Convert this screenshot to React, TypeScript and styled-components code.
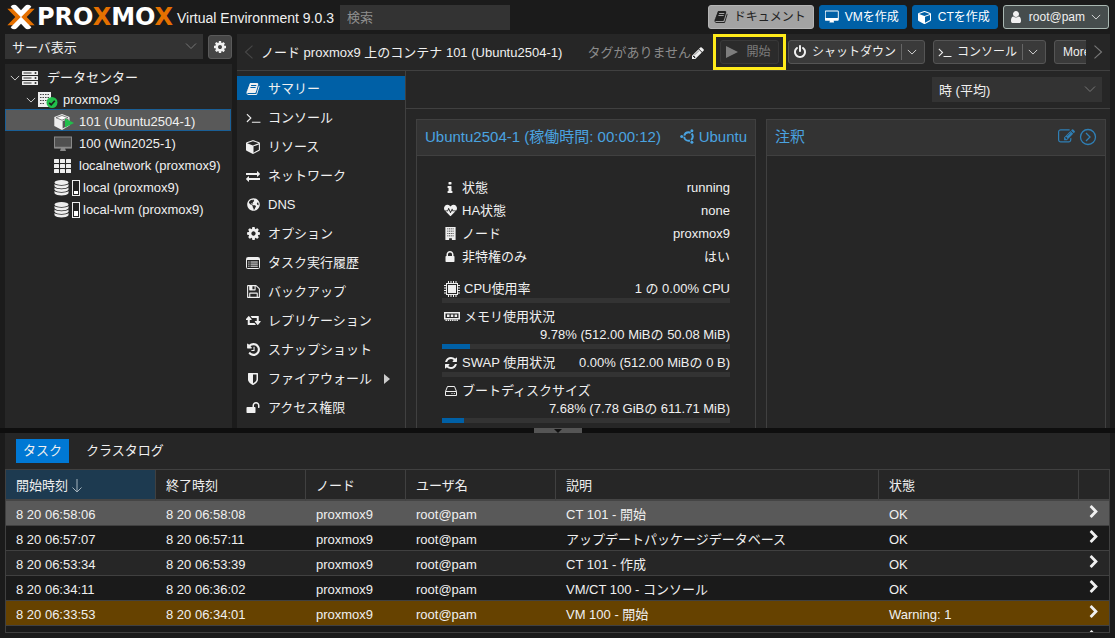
import React from "react";
import styled, { createGlobalStyle, css } from "styled-components";
import { FaHeartbeat, FaGlobeAmericas } from "react-icons/fa";

const GlobalStyle = createGlobalStyle`
  * { box-sizing: border-box; }
  body {
    margin: 0;
    background: #1b1b1b;
    color: #f0f0f0;
    font-family: "Liberation Sans", "Noto Sans CJK JP", sans-serif;
    font-size: 13px;
    line-height: 18px;
  }
  button, input, select {
    font-family: inherit;
    font-size: inherit;
    line-height: inherit;
    color: inherit;
  }
`;

/* ---------- icons ---------- */

const glyphs = {
  book: "M1703 478q40 57 18 129l-275 906q-19 64-76.5 107.5t-122.5 43.5h-923q-77 0-148.5-53.5t-99.5-131.5q-24-67-2-127 0-4 3-27t4-37q1-8-3-21.5t-3-19.5q2-11 8-21t16.5-23.5 16.5-23.5q23-38 45-91.5t30-91.5q3-10 .5-30t-.5-28q3-11 17-28t17-23q21-36 42-92t25-90q1-9-2.5-32t.5-28q4-13 22-30.5t22-22.5q19-26 42.5-84.5t27.5-96.5q1-8-3-25.5t-2-26.5q2-8 9-18t18-23 17-21q8-12 16.5-30.5t15-35 16-36 19.5-32 26.5-23.5 36-11.5 47.5 5.5l-1 3q38-9 51-9h761q74 0 114 56t18 130l-274 906q-36 119-71.5 153.5t-128.5 34.5h-869q-27 0-38 15-11 16-1 43 24 70 144 70h923q29 0 56-15.5t35-41.5l300-987q7-22 5-57 38 15 59 43zm-1064 2q-4 13 2 22.5t20 9.5h608q13 0 25.5-9.5t16.5-22.5l21-64q4-13-2-22.5t-20-9.5h-608q-13 0-25.5 9.5t-16.5 22.5zm-83 256q-4 13 2 22.5t20 9.5h608q13 0 25.5-9.5t16.5-22.5l21-64q4-13-2-22.5t-20-9.5h-608q-13 0-25.5 9.5t-16.5 22.5z",
  cube: "M896 1629l640-349v-636l-640 233v752zm-64-865l698-254-698-254-698 254zm832-252v768q0 35-18 65t-49 47l-704 384q-28 16-61 16t-61-16l-704-384q-31-17-49-47t-18-65v-768q0-40 23-73t61-47l704-256q22-8 44-8t44 8l704 256q38 14 61 47t23 73z",
  exchange: "M1792 1184v192q0 13-9.5 22.5t-22.5 9.5h-1376v192q0 13-9.5 22.5t-22.5 9.5q-12 0-24-10l-319-320q-9-9-9-22 0-14 9-23l320-320q9-9 23-9 13 0 22.5 9.5t9.5 22.5v192h1376q13 0 22.5 9.5t9.5 22.5zm0-544q0 14-9 23l-320 320q-9 9-23 9-13 0-22.5-9.5t-9.5-22.5v-192h-1376q-13 0-22.5-9.5t-9.5-22.5v-192q0-13 9.5-22.5t22.5-9.5h1376v-192q0-14 9-23t23-9q12 0 24 10l319 319q9 9 9 23z",
  cog: "M1152 896q0-106-75-181t-181-75-181 75-75 181 75 181 181 75 181-75 75-181zm512-109v222q0 12-8 23t-20 13l-185 28q-19 54-39 91 35 50 107 138 10 12 10 25t-9 23q-27 37-99 108t-94 71q-12 0-26-9l-138-108q-44 23-91 38-16 136-29 186-7 28-36 28h-222q-14 0-24.5-8.5t-11.5-21.5l-28-184q-49-16-90-37l-141 107q-10 9-25 9-14 0-25-11-126-114-165-168-7-10-7-23 0-12 8-23 15-21 51-66.5t54-70.5q-27-50-41-99l-183-27q-13-2-21-12.5t-8-23.5v-222q0-12 8-23t19-13l186-28q14-46 39-92-40-57-107-138-10-12-10-24 0-10 9-23 26-36 98.5-107.5t94.5-71.5q13 0 26 10l138 107q44-23 91-38 16-136 29-186 7-28 36-28h222q14 0 24.5 8.5t11.5 21.5l28 184q49 16 90 37l142-107q9-9 24-9 13 0 25 10 129 119 165 170 7 8 7 22 0 12-8 23-15 21-51 66.5t-54 70.5q26 50 41 98l183 28q13 2 21 12.5t8 23.5z",
  terminal: "M649 983l-466 466q-10 10-23 10t-23-10l-50-50q-10-10-10-23t10-23l393-393-393-393q-10-10-10-23t10-23l50-50q10-10 23-10t23 10l466 466q10 10 10 23t-10 23zm1079 457v64q0 14-9 23t-23 9h-960q-14 0-23-9t-9-23v-64q0-14 9-23t23-9h960q14 0 23 9t9 23z",
  desktop: "M1728 992v-832q0-13-9.500-22.500t-22.500-9.500h-1600q-13 0-22.500 9.500t-9.500 22.500v832q0 13 9.500 22.500t22.500 9.500h1600q13 0 22.500-9.500t9.500-22.500zm128-832v1088q0 66-47 113t-113 47h-544q0 37 16 77.500t32 71 16 43.500q0 26-19 45t-45 19h-512q-26 0-45-19t-19-45q0-14 16-44t32-70 16-78h-544q-66 0-113-47t-47-113v-1088q0-66 47-113t113-47h1600q66 0 113 47t47 113z",
  retweet: "M1216 1568q0 13-9.5 22.5t-22.5 9.5h-960q-8 0-13.500-2t-9-7-5.500-8-3-11.500-1-11.500v-600h-192q-26 0-45-19t-19-45q0-24 15-41l320-384q19-22 49-22t49 22l320 384q15 17 15 41 0 26-19 45t-45 19h-192v384h576q16 0 25 11l160 192q7 10 7 21zm640-416q0 24-15 41l-320 384q-20 23-49 23t-49-23l-320-384q-15-17-15-41 0-26 19-45t45-19h192v-384h-576q-16 0-25-12l-160-192q-7-9-7-20 0-13 9.500-22.500t22.500-9.500h960q8 0 13.500 2t9 7 5.500 8 3 11.500 1 11.500v600h192q26 0 45 19t19 45z",
  history: "M1664 896q0 156-61 298t-164 245-245 164-298 61q-172 0-327-72.5t-264-204.5q-7-10-6.5-22.5t8.5-20.5l137-138q10-9 25-9 16 2 23 12 73 95 179 147t225 52q104 0 198.5-40.5t163.5-109.5 109.5-163.5 40.5-198.5-40.5-198.5-109.5-163.5-163.5-109.5-198.5-40.5q-98 0-188 35.5t-160 101.5l137 138q31 30 14 69-17 40-59 40h-448q-26 0-45-19t-19-45v-448q0-42 40-59 39-17 69 14l130 129q107-101 244.5-156.5t284.5-55.5q156 0 298 61t245 164 164 245 61 298zm-640-288v448q0 14-9 23t-23 9h-320q-14 0-23-9t-9-23v-64q0-14 9-23t23-9h224v-352q0-14 9-23t23-9h64q14 0 23 9t9 23z",
  shield: "M1344 960v-640h-448v1137q119-63 213-137 235-184 235-360zm192-768v768q0 86-33.5 170.5t-83 150-118 127.5-126.5 103-121 77.5-89.5 49.5-42.5 20q-12 6-26 6t-26-6q-16-7-42.5-20t-89.5-49.5-121-77.5-126.5-103-118-127.5-83-150-33.5-170.5v-768q0-26 19-45t45-19h1152q26 0 45 19t19 45z",
  unlock: "M1728 576v256q0 26-19 45t-45 19h-64q-26 0-45-19t-19-45v-256q0-106-75-181t-181-75-181 75-75 181v192h96q40 0 68 28t28 68v576q0 40-28 68t-68 28h-960q-40 0-68-28t-28-68v-576q0-40 28-68t68-28h672v-192q0-185 131.5-316.5t316.5-131.5 316.5 131.5 131.5 316.5z",
  lock: "M640 768h512v-192q0-106-75-181t-181-75-181 75-75 181v192zm832 96v576q0 40-28 68t-68 28h-960q-40 0-68-28t-28-68v-576q0-40 28-68t68-28h32v-192q0-184 132-316t316-132 316 132 132 316v192h32q40 0 68 28t28 68z",
  save: "M512 1536h768v-384h-768v384zm896 0h128v-896q0-14-10-38.5t-20-34.5l-281-281q-10-10-34-20t-39-10v416q0 40-28 68t-68 28h-576q-40 0-68-28t-28-68v-416h-128v1280h128v-416q0-40 28-68t68-28h832q40 0 68 28t28 68v416zm-384-928v-320q0-13-9.5-22.5t-22.5-9.5h-192q-13 0-22.5 9.5t-9.5 22.5v320q0 13 9.5 22.5t22.5 9.5h192q13 0 22.5-9.5t9.5-22.5zm640 32v928q0 40-28 68t-68 28h-1344q-40 0-68-28t-28-68v-1344q0-40 28-68t68-28h928q40 0 88 20t76 48l280 280q28 28 48 76t20 88z",
  refresh: "M1639 1056q0 5-1 7-64 268-268 434.5t-478 166.5q-146 0-282.5-55t-243.5-157l-129 129q-19 19-45 19t-45-19-19-45v-448q0-26 19-45t45-19h448q26 0 45 19t19 45-19 45l-137 137q71 66 161 102t187 36q134 0 250-65t186-179q11-17 53-117 8-23 30-23h192q13 0 22.5 9.5t9.5 22.5zm25-800v448q0 26-19 45t-45 19h-448q-26 0-45-19t-19-45 19-45l138-138q-148-137-349-137-134 0-250 65t-186 179q-11 17-53 117-8 23-30 23h-199q-13 0-22.5-9.5t-9.5-22.5v-7q65-268 270-434.5t480-166.5q146 0 284 55.5t245 156.5l130-129q19-19 45-19t45 19 19 45z",
  power: "M1664 896q0 156-61 298t-164 245-245 164-298 61-298-61-245-164-164-245-61-298q0-182 80.5-343t226.5-270q43-32 95.5-25t83.5 50q32 42 24.5 94.5t-49.5 84.5q-98 74-151.5 181t-53.5 228q0 104 40.5 198.5t109.5 163.5 163.5 109.5 198.5 40.5 198.5-40.5 163.5-109.5 109.5-163.5 40.5-198.5q0-121-53.5-228t-151.5-181q-42-32-49.5-84.5t24.5-94.5q31-43 84-50t95 25q146 109 226.5 270t80.5 343zm-640-768v640q0 52-38 90t-90 38-90-38-38-90v-640q0-52 38-90t90-38 90 38 38 90z",
  user: "M1536 1399q0 109-62.5 187t-150.5 78h-854q-88 0-150.5-78t-62.5-187q0-85 8.5-160.5t31.5-152 58.5-131 94-89 134.5-34.5q131 128 313 128t313-128q76 0 134.5 34.5t94 89 58.5 131 31.5 152 8.5 160.5zm-256-887q0 159-112.5 271.5t-271.5 112.5-271.5-112.5-112.5-271.5 112.5-271.5 271.5-112.5 271.5 112.5 112.5 271.5z",
  pencil: "M491 1536l91-91-235-235-91 91v107h128v128h107zm523-928q0-22-22-22-10 0-17 7l-542 542q-7 7-7 17 0 22 22 22 10 0 17-7l542-542q7-7 7-17zm-54-192l416 416-832 832h-416v-416zm683 96q0 53-37 90l-166 166-416-416 166-165q36-38 90-38 53 0 91 38l235 234q37 39 37 91z",
  info: "M1216 1344v128q0 26-19 45t-45 19h-512q-26 0-45-19t-19-45v-128q0-26 19-45t45-19h64v-384h-64q-26 0-45-19t-19-45v-128q0-26 19-45t45-19h384q26 0 45 19t19 45v576h64q26 0 45 19t19 45zm-128-1152v192q0 26-19 45t-45 19h-256q-26 0-45-19t-19-45v-192q0-26 19-45t45-19h256q26 0 45 19t19 45z",
  chevron: "M1363 877l-742 742q-19 19-45 19t-45-19l-166-166q-19-19-19-45t19-45l531-531-531-531q-19-19-19-45t19-45l166-166q19-19 45-19t45 19l742 742q19 19 19 45t-19 45z",
  edit: "M888 1184l116-116-152-152-116 116v56h96v96h56zm440-720q-16-16-33 1l-350 350q-17 17-1 33t33-1l350-350q17-17 1-33zm80 594v190q0 119-84.5 203.5t-203.5 84.5h-832q-119 0-203.5-84.5t-84.5-203.5v-832q0-119 84.5-203.5t203.5-84.5h832q63 0 117 25 15 7 18 23 3 17-9 29l-49 49q-14 14-32 8-23-6-45-6h-832q-66 0-113 47t-47 113v832q0 66 47 113t113 47h832q66 0 113-47t47-113v-126q0-13 9-22l64-64q15-15 35-7t20 29zm-96-738l288 288-672 672h-288v-288zm444 132l-92 92-288-288 92-92q28-28 68-28t68 28l152 152q28 28 28 68t-28 68z",
};

type GlyphName = keyof typeof glyphs;

const viewBoxes: Partial<Record<GlyphName, string>> = {
  desktop: "-32 0 1920 1792",
  retweet: "-32 128 1920 1792",
};

const Svg = styled.svg`
  display: block;
  flex: none;
`;

function Icon({ name, size = 14 }: { name: GlyphName; size?: number }) {
  return (
    <Svg width={size} height={size} viewBox={viewBoxes[name] ?? "0 0 1792 1792"} fill="currentColor" aria-hidden="true">
      <path d={glyphs[name]} />
    </Svg>
  );
}

function Chevron({ dir = "down", size = 12 }: { dir?: "down" | "left" | "right"; size?: number }) {
  const d = { down: "M1 3.500 L6 8.500 L11 3.500", left: "M9 0.500 L3 6 L9 11.500", right: "M3 0.500 L9 6 L3 11.500" }[dir];
  return (
    <Svg width={size} height={size} viewBox="0 0 12 12" fill="none" stroke="currentColor" strokeWidth="1" aria-hidden="true">
      <path d={d} />
    </Svg>
  );
}

const ServerIcon = () => (
  <Svg width="16" height="14" viewBox="0 0 16 14" aria-hidden="true">
    {[0, 5, 10].map((y) => (
      <g key={y}>
        <rect x="0" y={y} width="16" height="4" rx="0.500" fill="#eee" />
        <rect x="1.500" y={y + 1.500} width="8" height="1" fill="#333" />
        <rect x="12.500" y={y + 1} width="2" height="2" rx="1" fill="#333" />
      </g>
    ))}
  </Svg>
);

const Building = ({ size = 14 }: { size?: number }) => (
  <Svg width={size} height={size} viewBox="0 0 14 14" aria-hidden="true">
    <path d="M1.500 0h11v14h-4v-2h-3v2h-4z" fill="#eee" />
    <path d="M3.500 2h7M3.500 4.500h7M3.500 7h7M3.500 9.500h7" stroke="#444" strokeWidth="1" strokeDasharray="1.200 0.700" />
  </Svg>
);

const NodeIcon = () => (
  <Svg width="20" height="18" viewBox="0 0 20 18" aria-hidden="true">
    <path d="M0 1h13v15H0z" fill="#eee" />
    <path d="M2 3.500h9M2 6.500h9M2 9.500h9M2 12.500h5" stroke="#444" strokeWidth="1.200" strokeDasharray="1.500 1" />
    <circle cx="14" cy="11.500" r="5.500" fill="#21bf4b" />
    <path d="M11.200 11.800l2 2 3.600-4" stroke="#1c1c1c" strokeWidth="1.700" fill="none" />
  </Svg>
);

const RunningCt = () => (
  <Svg width="20" height="16" viewBox="0 0 20 16" aria-hidden="true">
    <path d="M8 0l7.500 3v8.500L8 16 .3 12V3z" fill="#eee" />
    <path d="M2 3.700l6 2.500 6-2.500-6-2.200z" fill="#fff" stroke="#666" strokeWidth="0.800" />
    <path d="M8.600 7.200l5.800-2.400v6.400l-5.800 3.400z" fill="#595959" />
    <path d="M11 4.500l9 4.500-9 4.500z" fill="#21bf4b" />
  </Svg>
);

const StoppedVm = () => (
  <Svg width="18" height="16" viewBox="0 0 18 16" aria-hidden="true">
    <rect x="0.500" y="1" width="17" height="11" fill="#505050" stroke="#8a8a8a" />
    <path d="M7 12h4l1 3H6z" fill="#8a8a8a" />
    <path d="M1 11.500h16" stroke="#8a8a8a" strokeWidth="1.500" />
  </Svg>
);

const GridIcon = () => (
  <Svg width="17" height="14" viewBox="0 0 17 14" fill="#eee" aria-hidden="true">
    {[0, 5, 10].map((y) => [0, 6, 12].map((x) => <rect key={x + "-" + y} x={x} y={y} width="5" height="4" rx="0.500" />))}
  </Svg>
);

const StorageIcon = ({ level }: { level: number }) => (
  <Svg width="26" height="16" viewBox="0 0 26 16" aria-hidden="true">
    <ellipse cx="7.500" cy="2.500" rx="7" ry="2.500" fill="#eee" />
    {[4, 7.5, 11].map((y) => (
      <path key={y} d={`M.5 ${y}c2 2.200 12 2.200 14 0v2.200c-2 3-12 3-14 0z`} fill="#eee" />
    ))}
    <rect x="18.500" y="0.500" width="7" height="15" fill="#222" stroke="#eee" />
    <rect x="20" y={14 - level} width="4" height={level} fill="#fff" />
  </Svg>
);

const ListIcon = () => (
  <Svg width="14" height="12" viewBox="0 0 14 12" fill="none" stroke="#eee" aria-hidden="true">
    <rect x="0.500" y="0.500" width="13" height="11" rx="1" />
    <path d="M1 2h12" strokeWidth="2" />
    <path d="M2.200 5h1.300M4.500 5h7.300M2.200 7.100h1.300M4.500 7.100h7.300M2.200 9.200h1.300M4.500 9.200h7.300" />
  </Svg>
);

const CpuIcon = () => (
  <Svg width="16" height="16" viewBox="0 0 16 16" aria-hidden="true">
    <rect x="2.500" y="2.500" width="11" height="11" fill="none" stroke="#eee" />
    <rect x="4" y="4" width="8" height="8" fill="#eee" />
    <path d="M4.500 0v16M7 0v16M9.500 0v16M12 0v16" stroke="#eee" strokeDasharray="2.500 11 2.500" />
    <path d="M0 4.500h16M0 7h16M0 9.500h16M0 12h16" stroke="#eee" strokeDasharray="2.500 11 2.500" />
  </Svg>
);

const MemoryIcon = () => (
  <Svg width="16" height="10" viewBox="0 0 16 10" aria-hidden="true">
    <rect x="0.750" y="0.750" width="14.500" height="6" fill="none" stroke="#eee" strokeWidth="1.500" />
    <path d="M3 2.500h2.500v2.500H3zM6.800 2.500h2.500v2.500H6.800zM10.600 2.500h2.500v2.500h-2.500z" fill="#eee" />
    <path d="M1.500 8.300h13" stroke="#eee" strokeWidth="1.600" strokeDasharray="1.400 0.800" />
  </Svg>
);

const DiskIcon = () => (
  <Svg width="12" height="10" viewBox="0 0 12 10" fill="none" stroke="#eee" aria-hidden="true">
    <path d="M.5 5.500L2.500.5h7l2 5v4H.5zM.5 5.500h11" strokeLinejoin="round" />
    <path d="M6.500 7.500h1M8.800 7.500h1" />
  </Svg>
);

const UbuntuIcon = () => (
  <Svg width="15" height="15" viewBox="0 0 15 15" fill="none" stroke="currentColor" aria-hidden="true">
    <circle cx="8.500" cy="7.500" r="4.300" strokeWidth="2" strokeDasharray="7.900 1.106" strokeDashoffset="-5.050" />
    <g fill="currentColor" stroke="none">
      <circle cx="1.700" cy="7.500" r="1.500" />
      <circle cx="11.900" cy="1.700" r="1.500" />
      <circle cx="11.900" cy="13.300" r="1.500" />
    </g>
  </Svg>
);

const PlayIcon = ({ size = 12 }: { size?: number }) => (
  <Svg width={size} height={size} viewBox="0 0 12 12" fill="currentColor" aria-hidden="true">
    <path d="M0 0l12 6-12 6z" />
  </Svg>
);

const LogoMark = () => (
  <Svg width="28" height="26" viewBox="0 0 84 78" aria-hidden="true">
    <path d="M1 14h14q6 0 10 4l20 21-20 21q-4 4-10 4H1l24-25z" fill="#e57000" />
    <path d="M83 14H69q-6 0-10 4L39 39l20 21q4 4 10 4h14L59 39z" fill="#e57000" />
    <path d="M11 8q3-6 10-6 6 0 9 4l12 13L54 6q3-4 9-4 7 0 10 6L42 40z" fill="#fff" />
    <path d="M11 70q3 6 10 6 6 0 9-4l12-13 12 13q3 4 9 4 7 0 10-6L42 38z" fill="#fff" />
  </Svg>
);

/* ---------- frame ---------- */

const Shell = styled.div`
  height: 100vh;
  display: flex;
  flex-direction: column;
  overflow: hidden;
`;

const TopBar = styled.header`
  display: flex;
  align-items: center;
  height: 34px;
  flex: none;
  padding: 0 6px 0 7px;
`;

const Wordmark = styled.span`
  margin-left: 2px;
  width: 140px;
  font-family: "DejaVu Sans", sans-serif;
  font-weight: 700;
  font-size: 24px;
  line-height: 26px;
  color: #fff;
`;

const Orange = styled.span`
  color: #e57000;
`;

const Version = styled.span`
  padding-top: 2px;
  font-size: 14px;
  white-space: nowrap;
`;

const Search = styled.input`
  width: 170px;
  height: 25px;
  margin-left: 6px;
  padding: 0 7px;
  border: 0;
  background: #333;
  &::placeholder {
    color: #8f8f8f;
    opacity: 1;
  }
`;

const TopActions = styled.div`
  display: flex;
  gap: 5px;
  margin-left: auto;
`;

type Tone = "plain" | "primary" | "light" | "user";

const tones = {
  plain: css`
    background: #3a3a3a;
    border-color: #555;
  `,
  primary: css`
    background: #0060a6;
    border-color: #0060a6;
    color: #fff;
  `,
  light: css`
    background: #a3a3a3;
    border-color: #b5b5b5;
    color: #222;
  `,
  user: css`
    background: #464d4d;
    border-color: #a9b8b2;
  `,
};

const Button = styled.button<{ $tone?: Tone; $gap?: number }>`
  display: flex;
  align-items: center;
  flex: none;
  gap: ${(p) => p.$gap ?? 6}px;
  height: 24px;
  padding: 0 7px 0 5px;
  border: 1px solid;
  border-radius: 3px;
  font-size: 12px;
  white-space: nowrap;
  ${(p) => tones[p.$tone ?? "plain"]}
  &:disabled {
    color: #7d7d7d;
    background: #2b2b2b;
    border-color: #383838;
  }
`;

const StripButton = styled(Button)`
  gap: 5px;
  padding-left: 4px;
`;

const MoreButton = styled(Button)`
  padding: 0 8px;
`;

const SplitArrow = styled.span`
  display: flex;
  align-items: center;
  height: 16px;
  padding-left: 5px;
  border-left: 1px solid #666;
`;

const Workspace = styled.div`
  flex: 1;
  min-height: 0;
  display: flex;
  gap: 5px;
  padding: 0 5px;
`;

const Sidebar = styled.aside`
  width: 227px;
  flex: none;
  display: flex;
  flex-direction: column;
`;

const ViewBar = styled.div`
  display: flex;
  gap: 5px;
  align-items: center;
  height: 25px;
  margin-bottom: 5px;
`;

const SelectBox = styled.div<{ $width?: number }>`
  position: relative;
  flex: ${(p) => (p.$width ? "none" : "1")};
  ${(p) => p.$width && `width: ${p.$width}px;`}
  height: 25px;
  color: #f0f0f0;
  select {
    appearance: none;
    width: 100%;
    height: 25px;
    padding: 2px 26px 0 7px;
    border: 0;
    background: #333;
  }
  svg {
    position: absolute;
    right: 6px;
    top: 6px;
    color: #777;
    pointer-events: none;
  }
`;

const GearButton = styled.button`
  display: flex;
  align-items: center;
  justify-content: center;
  width: 24px;
  height: 24px;
  padding: 0;
  border: 1px solid #5a5a5a;
  border-radius: 3px;
  background: #464646;
`;

const Tree = styled.ul`
  flex: 1;
  min-height: 0;
  margin: 0;
  padding: 1px 0;
  list-style: none;
  background: #262626;
`;

const TreeRow = styled.li<{ $indent: number; $selected?: boolean }>`
  display: flex;
  align-items: center;
  height: 22px;
  margin-right: 1px;
  padding: 4px 0 0 ${(p) => p.$indent}px;
  border: 1px solid ${(p) => (p.$selected ? "#1a5f96" : "transparent")};
  background: ${(p) => (p.$selected ? "#595959" : "transparent")};
  white-space: nowrap;
`;

const TreeIcon = styled.span<{ $width: number }>`
  display: flex;
  width: ${(p) => p.$width}px;
  margin-bottom: 1px;
`;

const Panel = styled.main`
  flex: 1;
  min-width: 0;
  display: flex;
  flex-direction: column;
  background: #262626;
`;

const PanelHeader = styled.div`
  display: flex;
  flex: none;
  height: 37px;
  border-bottom: 1px solid #404040;
`;

const ScrollArrow = styled.span<{ $dim?: boolean }>`
  display: flex;
  align-items: center;
  justify-content: center;
  flex: none;
  width: 24px;
  color: ${(p) => (p.$dim ? "#474747" : "#777")};
`;

const HeaderStrip = styled.div`
  flex: 1;
  min-width: 0;
  display: flex;
  align-items: center;
  overflow: hidden;
  white-space: nowrap;
`;

const Title = styled.span`
  flex: 1 0 auto;
  padding-top: 2px;
`;

const Tags = styled.span`
  display: flex;
  align-items: center;
  margin-right: 8px;
  padding-top: 2px;
  color: #8a8a8a;
  svg {
    color: #f0f0f0;
  }
`;

const Highlight = styled.span`
  display: flex;
  align-items: center;
  justify-content: center;
  flex: none;
  width: 73px;
  height: 36px;
  margin-right: 2px;
  border: 3px solid #ffeb1a;
`;

const HeaderButtons = styled.div`
  display: flex;
  gap: 8px;
  width: 298px;
  overflow: hidden;
`;

const PanelBody = styled.div`
  flex: 1;
  min-height: 0;
  display: flex;
  overflow: hidden;
`;

const Menu = styled.nav`
  display: flex;
  flex-direction: column;
  gap: 5px;
  flex: none;
  width: 169px;
  padding-top: 5px;
  border-right: 1px solid #404040;
`;

const MenuItem = styled.a<{ $active?: boolean }>`
  display: flex;
  align-items: center;
  flex: none;
  height: 24px;
  padding: 2px 0 0 9px;
  color: #f0f0f0;
  text-decoration: none;
  background: ${(p) => (p.$active ? "#0060a6" : "transparent")};
`;

const MenuIcon = styled.span`
  display: flex;
  justify-content: center;
  width: 14px;
  margin: 0 8px 1px 0;
`;

const SubmenuArrow = styled.span`
  margin-left: 12px;
  color: #ccc;
`;

const Content = styled.section`
  flex: 1;
  min-width: 0;
  display: flex;
  flex-direction: column;
`;

const ContentBar = styled.div`
  display: flex;
  justify-content: flex-end;
  align-items: center;
  flex: none;
  height: 38px;
  padding-right: 8px;
  border-bottom: 1px solid #404040;
`;

const Cards = styled.div`
  flex: 1;
  display: grid;
  grid-template-columns: 1fr 1fr;
  gap: 10px;
  padding: 10px 4px 0 10px;
`;

const Card = styled.article`
  border: 1px solid #404040;
  border-bottom: 0;
`;

const CardHeader = styled.h2`
  display: flex;
  align-items: center;
  justify-content: space-between;
  height: 36px;
  margin: 0;
  padding: 0 8px 2px;
  border-bottom: 1px solid #404040;
  background: #333;
  color: #4aa3e0;
  font-size: 15px;
  font-weight: 400;
  line-height: 20px;
  white-space: nowrap;
`;

const HeaderTools = styled.span`
  display: flex;
  align-items: center;
  gap: 4px;
`;

const CardBody = styled.div`
  padding: 20px 25px 0;
`;

const Fact = styled.div`
  display: flex;
  align-items: center;
  height: 23px;
`;

const Usage = styled.div`
  display: flex;
  flex-wrap: wrap;
  align-items: center;
  padding-top: 4px;
`;

const FactIcon = styled.span`
  display: flex;
  justify-content: center;
  min-width: 14px;
  margin: 0 5px 0 1px;
`;

const UsageIcon = styled(FactIcon)`
  margin: 0 4px 0 2px;
`;

const Value = styled.span<{ $full?: boolean }>`
  margin-left: auto;
  ${(p) =>
    p.$full &&
    css`
      width: 100%;
      text-align: right;
    `}
`;

const Track = styled.div`
  width: 100%;
  height: 5px;
  margin-bottom: 1px;
  background: #333;
`;

const Fill = styled.div`
  height: 5px;
  background: #0060a6;
`;

const UsageGroup = styled.div`
  padding-top: 8px;
`;

const RoundButton = styled.button`
  display: flex;
  padding: 0;
  border: 0;
  background: none;
  color: #2f7fb5;
`;

const Splitter = styled.div`
  display: flex;
  justify-content: center;
  flex: none;
  height: 5px;
  background: #0e0e0e;
`;

const SplitGrip = styled.button`
  display: flex;
  justify-content: center;
  width: 48px;
  height: 5px;
  padding: 1px 0 0;
  border: 0;
  background: #555;
`;

/* ---------- task log ---------- */

const LogPanel = styled.section`
  display: flex;
  flex-direction: column;
  flex: none;
  height: 200px;
  margin: 0 5px 5px;
  background: #262626;
`;

const Tabs = styled.div`
  display: flex;
  align-items: center;
  gap: 10px;
  flex: none;
  height: 36px;
  padding: 0 11px;
`;

const Tab = styled.button<{ $active?: boolean }>`
  height: 24px;
  padding: 0 7px;
  border: 0;
  background: ${(p) => (p.$active ? "#0078d4" : "transparent")};
`;

const TableBox = styled.div`
  flex: 1;
  min-height: 0;
  overflow: hidden;
  border: 1px solid #404040;
`;

const Table = styled.table`
  width: 100%;
  table-layout: fixed;
  border-collapse: separate;
  border-spacing: 0;
`;

const Th = styled.th<{ $sorted?: boolean }>`
  height: 31px;
  padding: 2px 10px 0;
  border-right: 1px solid #404040;
  border-bottom: 2px solid #454545;
  background: ${(p) => (p.$sorted ? "#1d3a50" : "transparent")};
  font-weight: 400;
  text-align: left;
  &:last-child {
    border-right: 0;
  }
  span {
    display: flex;
    align-items: center;
    gap: 4px;
  }
`;

const Row = styled.tr<{ $bg: string }>`
  background: ${(p) => p.$bg};
  td {
    height: 25px;
    padding: 4px 10px 0;
    border-bottom: 1px solid #404040;
    white-space: nowrap;
  }
  td:last-child {
    padding: 0 8px 2px;
  }
`;

const menu: { label: string; icon: React.ReactNode; sub?: boolean }[] = [
  { label: "サマリー", icon: <Icon name="book" /> },
  { label: "コンソール", icon: <Icon name="terminal" size={15} /> },
  { label: "リソース", icon: <Icon name="cube" size={15} /> },
  { label: "ネットワーク", icon: <Icon name="exchange" /> },
  { label: "DNS", icon: <FaGlobeAmericas size={13} /> },
  { label: "オプション", icon: <Icon name="cog" size={15} /> },
  { label: "タスク実行履歴", icon: <ListIcon /> },
  { label: "バックアップ", icon: <Icon name="save" size={15} /> },
  { label: "レプリケーション", icon: <Icon name="retweet" size={15} /> },
  { label: "スナップショット", icon: <Icon name="history" size={15} /> },
  { label: "ファイアウォール", icon: <Icon name="shield" />, sub: true },
  { label: "アクセス権限", icon: <Icon name="unlock" /> },
];

const facts = [
  { label: "状態", value: "running", icon: <Icon name="info" /> },
  { label: "HA状態", value: "none", icon: <FaHeartbeat size={13} /> },
  { label: "ノード", value: "proxmox9", icon: <Building size={13} /> },
  { label: "非特権のみ", value: "はい", icon: <Icon name="lock" /> },
];

const usages = [
  { label: "CPU使用率", value: "1 の 0.00% CPU", used: 0, wrap: false, icon: <CpuIcon /> },
  { label: "メモリ使用状況", value: "9.78% (512.00 MiBの 50.08 MiB)", used: 9.78, wrap: true, icon: <MemoryIcon /> },
  { label: "SWAP 使用状況", value: "0.00% (512.00 MiBの 0 B)", used: 0, wrap: false, icon: <Icon name="refresh" /> },
  { label: "ブートディスクサイズ", value: "7.68% (7.78 GiBの 611.71 MiB)", used: 7.68, wrap: true, icon: <DiskIcon /> },
];

const tasks = [
  { start: "8 20 06:58:06", end: "8 20 06:58:08", text: "CT 101 - 開始", status: "OK", bg: "#595959" },
  { start: "8 20 06:57:07", end: "8 20 06:57:11", text: "アップデートパッケージデータベース", status: "OK", bg: "#1a1a1a" },
  { start: "8 20 06:53:34", end: "8 20 06:53:39", text: "CT 101 - 作成", status: "OK", bg: "#262626" },
  { start: "8 20 06:34:11", end: "8 20 06:36:02", text: "VM/CT 100 - コンソール", status: "OK", bg: "#1a1a1a" },
  { start: "8 20 06:33:53", end: "8 20 06:34:01", text: "VM 100 - 開始", status: "Warning: 1", bg: "#664200" },
];

const leaves = [
  { label: "101 (Ubuntu2504-1)", icon: <RunningCt />, width: 25, selected: true },
  { label: "100 (Win2025-1)", icon: <StoppedVm />, width: 25 },
  { label: "localnetwork (proxmox9)", icon: <GridIcon />, width: 25 },
  { label: "local (proxmox9)", icon: <StorageIcon level={3} />, width: 29 },
  { label: "local-lvm (proxmox9)", icon: <StorageIcon level={5} />, width: 29 },
];

export default function App() {
  return (
    <Shell>
      <GlobalStyle />
      <TopBar>
        <LogoMark />
        <Wordmark>
          PRO<Orange>X</Orange>MO<Orange>X</Orange>
        </Wordmark>
        <Version>Virtual Environment 9.0.3</Version>
        <Search type="search" placeholder="検索" aria-label="検索" />
        <TopActions>
          <Button $tone="light"><Icon name="book" />ドキュメント</Button>
          <Button $tone="primary"><Icon name="desktop" />VMを作成</Button>
          <Button $tone="primary"><Icon name="cube" />CTを作成</Button>
          <Button $tone="user"><Icon name="user" />root@pam <Chevron size={10} /></Button>
        </TopActions>
      </TopBar>

      <Workspace>
        <Sidebar>
          <ViewBar>
            <SelectBox>
              <select aria-label="表示"><option>サーバ表示</option></select>
              <Chevron />
            </SelectBox>
            <GearButton aria-label="設定"><Icon name="cog" /></GearButton>
          </ViewBar>
          <Tree>
            <TreeRow $indent={4}>
              <TreeIcon $width={12}><Chevron size={10} /></TreeIcon>
              <TreeIcon $width={25}><ServerIcon /></TreeIcon>
              データセンター
            </TreeRow>
            <TreeRow $indent={20}>
              <TreeIcon $width={12}><Chevron size={10} /></TreeIcon>
              <TreeIcon $width={25}><NodeIcon /></TreeIcon>
              proxmox9
            </TreeRow>
            {leaves.map((leaf) => (
              <TreeRow key={leaf.label} $indent={48} $selected={leaf.selected}>
                <TreeIcon $width={leaf.width}>{leaf.icon}</TreeIcon>
                {leaf.label}
              </TreeRow>
            ))}
          </Tree>
        </Sidebar>

        <Panel>
          <PanelHeader>
            <ScrollArrow $dim><Chevron dir="left" size={14} /></ScrollArrow>
            <HeaderStrip>
              <Title>ノード proxmox9 上のコンテナ 101 (Ubuntu2504-1)</Title>
              <Tags>タグがありません<Icon name="pencil" /></Tags>
              <Highlight>
                <Button disabled $gap={8}><PlayIcon />開始</Button>
              </Highlight>
              <HeaderButtons>
                <StripButton>
                  <Icon name="power" />シャットダウン<SplitArrow><Chevron size={10} /></SplitArrow>
                </StripButton>
                <StripButton>
                  <Icon name="terminal" />コンソール<SplitArrow><Chevron size={10} /></SplitArrow>
                </StripButton>
                <MoreButton>More</MoreButton>
              </HeaderButtons>
            </HeaderStrip>
            <ScrollArrow><Chevron dir="right" size={14} /></ScrollArrow>
          </PanelHeader>

          <PanelBody>
            <Menu>
              {menu.map((item, i) => (
                <MenuItem key={item.label} href="#" $active={i === 0}>
                  <MenuIcon>{item.icon}</MenuIcon>
                  {item.label}
                  {item.sub && (
                    <SubmenuArrow>
                      <Svg width="6" height="10" viewBox="0 0 6 10" fill="currentColor" aria-hidden="true">
                        <path d="M0 0l6 5-6 5z" />
                      </Svg>
                    </SubmenuArrow>
                  )}
                </MenuItem>
              ))}
            </Menu>
            <Content>
              <ContentBar>
                <SelectBox $width={170}>
                  <select aria-label="期間"><option>時 (平均)</option></select>
                  <Chevron />
                </SelectBox>
              </ContentBar>
              <Cards>
                <Card>
                  <CardHeader>
                    Ubuntu2504-1 (稼働時間: 00:00:12)
                    <HeaderTools><UbuntuIcon />Ubuntu</HeaderTools>
                  </CardHeader>
                  <CardBody>
                    {facts.map((f) => (
                      <Fact key={f.label}>
                        <FactIcon>{f.icon}</FactIcon>
                        {f.label}
                        <Value>{f.value}</Value>
                      </Fact>
                    ))}
                    <UsageGroup>
                      {usages.map((u) => (
                        <Usage key={u.label}>
                          <UsageIcon>{u.icon}</UsageIcon>
                          {u.label}
                          <Value $full={u.wrap}>{u.value}</Value>
                          <Track><Fill style={{ width: `${u.used}%` }} /></Track>
                        </Usage>
                      ))}
                    </UsageGroup>
                  </CardBody>
                </Card>
                <Card>
                  <CardHeader>
                    注釈
                    <HeaderTools>
                      <RoundButton aria-label="編集"><Icon name="edit" size={17} /></RoundButton>
                      <RoundButton aria-label="折りたたむ">
                        <Svg width="18" height="18" viewBox="0 0 18 18" fill="none" stroke="currentColor" strokeWidth="1.300" aria-hidden="true">
                          <circle cx="9" cy="9" r="7.500" />
                          <path d="M7 5l4 4-4 4" />
                        </Svg>
                      </RoundButton>
                    </HeaderTools>
                  </CardHeader>
                </Card>
              </Cards>
            </Content>
          </PanelBody>
        </Panel>
      </Workspace>

      <Splitter>
        <SplitGrip aria-label="ログを折りたたむ">
          <Svg width="8" height="4" viewBox="0 0 8 4" fill="#111" aria-hidden="true"><path d="M0 0h8L4 4z" /></Svg>
        </SplitGrip>
      </Splitter>

      <LogPanel>
        <Tabs>
          <Tab $active>タスク</Tab>
          <Tab>クラスタログ</Tab>
        </Tabs>
        <TableBox>
          <Table>
            <colgroup>
              <col width="150" />
              <col width="150" />
              <col width="100" />
              <col width="150" />
              <col />
              <col width="200" />
              <col width="30" />
            </colgroup>
            <thead>
              <tr>
                <Th $sorted>
                  <span>
                    開始時刻
                    <Svg width="10" height="14" viewBox="0 0 10 14" fill="none" stroke="#a5b3bd" aria-hidden="true">
                      <path d="M5 0v13M.5 8.500L5 13l4.500-4.500" />
                    </Svg>
                  </span>
                </Th>
                <Th>終了時刻</Th>
                <Th>ノード</Th>
                <Th>ユーザ名</Th>
                <Th>説明</Th>
                <Th>状態</Th>
                <Th aria-label="操作" />
              </tr>
            </thead>
            <tbody>
              {tasks.map((t) => (
                <Row key={t.start} $bg={t.bg}>
                  <td>{t.start}</td>
                  <td>{t.end}</td>
                  <td>proxmox9</td>
                  <td>root@pam</td>
                  <td>{t.text}</td>
                  <td>{t.status}</td>
                  <td><Icon name="chevron" /></td>
                </Row>
              ))}
              <Row $bg="#1a1a1a">
                <td colSpan={6} />
                <td><Icon name="chevron" /></td>
              </Row>
            </tbody>
          </Table>
        </TableBox>
      </LogPanel>
    </Shell>
  );
}
